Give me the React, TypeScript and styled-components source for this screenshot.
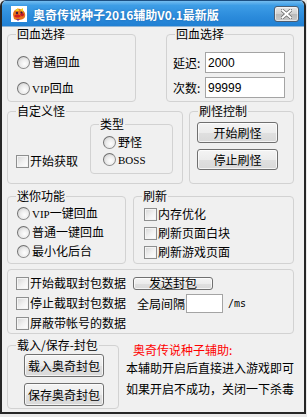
import React from 'react';
import styled, { createGlobalStyle } from 'styled-components';

const GlobalStyle = createGlobalStyle`
    html, body {
        margin: 0;
        padding: 0;
        background: #e9e9e9;
    }
    body {
        font-family: "SimSun", "Noto Sans CJK SC", sans-serif;
        font-size: 12px;
        color: #000;
    }
`;

const Window = styled.div`
    width: 306px;
    height: 414px;
    box-sizing: border-box;
    border: 2px solid #262626;
    border-top: 1px solid #1c4f82;
    border-radius: 6px 6px 0 0;
    overflow: hidden;
    background: #f0f0f0;
    display: flex;
    flex-direction: column;
`;

const TitleBar = styled.div`
    height: 25px;
    flex-shrink: 0;
    display: flex;
    align-items: center;
    padding: 0 5px 0 9px;
    background: linear-gradient(to bottom, #74bdf0 0%, #3d9de6 18%, #2c8cdc 60%, #2180d3 100%);
    border-bottom: 1px solid #8fb6d8;
`;

const Title = styled.div`
    flex: 1;
    margin-left: 6px;
    padding-top: 2px;
    color: #fff;
    font-weight: bold;
    font-size: 12px;
    line-height: 14px;
    font-family: "Noto Sans CJK SC", sans-serif;
    text-shadow: 0 0 2px rgba(0, 40, 90, 0.35);
`;

const CloseButton = styled.div`
    width: 25px;
    height: 16px;
    box-sizing: border-box;
    border: 1px solid #4d5d70;
    border-radius: 3px;
    background: linear-gradient(to bottom, #e6e6e6 0%, #d0d0d0 50%, #b9b9b9 51%, #c9c9c9 100%);
    box-shadow: inset 0 0 0 1px rgba(255, 255, 255, 0.55);
    display: flex;
    align-items: center;
    justify-content: center;
`;

const Body = styled.div`
    flex: 1;
    display: flex;
    flex-direction: column;
    padding-left: 5px;
`;

const Row = styled.div<{ $mt: number; $gap: number }>`
    display: flex;
    align-items: flex-start;
    margin-top: ${({ $mt }) => $mt}px;
    gap: ${({ $gap }) => $gap}px;
`;

const Group = styled.div<{ $w: number; $h: number }>`
    position: relative;
    box-sizing: border-box;
    width: ${({ $w }) => $w}px;
    height: ${({ $h }) => $h}px;
    border: 1px solid #d2d2d2;
    border-radius: 4px;
    flex-shrink: 0;
`;

const Legend = styled.span`
    position: absolute;
    top: -8px;
    left: 8px;
    padding: 0 1px;
    background: #f0f0f0;
    line-height: 14px;
    white-space: nowrap;
`;

const Stack = styled.div<{ $pt: number; $pl: number; $gap: number }>`
    display: flex;
    flex-direction: column;
    align-items: flex-start;
    padding-top: ${({ $pt }) => $pt}px;
    padding-left: ${({ $pl }) => $pl}px;
    gap: ${({ $gap }) => $gap}px;
`;

const Split = styled.div`
    display: flex;
    justify-content: space-between;
    align-items: flex-start;
    padding: 12px 9px 0 8px;
`;

const Shift = styled.div<{ $mt: number }>`
    margin-top: ${({ $mt }) => $mt}px;
`;

const Item = styled.label<{ $w?: number }>`
    display: flex;
    align-items: center;
    height: 14px;
    line-height: 14px;
    gap: 2px;
    white-space: nowrap;
    ${({ $w }) => ($w ? `width: ${$w}px; flex-shrink: 0;` : '')}
`;

const RadioDot = styled.span`
    width: 13px;
    height: 13px;
    box-sizing: border-box;
    border-radius: 50%;
    border: 1px solid #8b8b8b;
    border-top-color: #6f6f6f;
    border-left-color: #6f6f6f;
    background: radial-gradient(circle at 60% 62%, #fefefe 0%, #ececec 45%, #c4c4c4 100%);
    flex-shrink: 0;
`;

const CheckBox = styled.span`
    width: 13px;
    height: 13px;
    box-sizing: border-box;
    border: 1px solid #8e8f8f;
    background: linear-gradient(135deg, #d6d6d6 0%, #f2f2f2 55%, #ffffff 100%);
    box-shadow: inset 0 0 0 1px #f4f4f4;
    flex-shrink: 0;
    margin-right: -1px;
`;

const Latin = styled.span`
    font-family: "Liberation Serif", serif;
    font-size: 11px;
`;

const Field = styled.div`
    display: flex;
    align-items: center;
`;

const FieldLabel = styled.span`
    width: 32px;
    line-height: 14px;
    white-space: nowrap;
`;

const Input = styled.div<{ $w: number; $h: number }>`
    width: ${({ $w }) => $w}px;
    height: ${({ $h }) => $h}px;
    box-sizing: border-box;
    border: 1px solid #a4a4a4;
    background: #fff;
    padding-left: 2px;
    display: flex;
    align-items: center;
    font-family: "Liberation Sans", sans-serif;
    font-size: 12px;
    flex-shrink: 0;
`;

const Button = styled.div<{ $w: number; $h: number }>`
    width: ${({ $w }) => $w}px;
    height: ${({ $h }) => $h}px;
    box-sizing: border-box;
    border: 1px solid #707070;
    border-radius: 3px;
    background: linear-gradient(to bottom, #f4f4f4 0%, #ececec 50%, #e0e0e0 51%, #d9d9d9 100%);
    box-shadow: inset 0 0 0 1px rgba(255, 255, 255, 0.7);
    display: flex;
    align-items: center;
    justify-content: center;
    line-height: 12px;
    white-space: nowrap;
    flex-shrink: 0;
`;

const PacketRow = styled.div`
    display: flex;
    align-items: center;
    height: 20px;
`;

const PacketLabel = styled.span`
    margin-left: 4px;
    margin-right: 1px;
    white-space: nowrap;
`;

const Unit = styled.span`
    margin-left: 5px;
    font-family: "DejaVu Sans Mono", monospace;
    font-size: 10px;
`;

const Notes = styled.div`
    margin-left: 7px;
    margin-top: -2px;
    display: flex;
    flex-direction: column;
`;

const NoteLine = styled.div<{ $mt: number; $red?: boolean; $indent?: number }>`
    margin-top: ${({ $mt }) => $mt}px;
    margin-left: ${({ $indent }) => $indent || 0}px;
    line-height: 14px;
    white-space: nowrap;
    color: ${({ $red }) => ($red ? '#ff0000' : '#000')};
`;

const AppIcon = () => (
    <svg width="16" height="16" viewBox="0 0 16 16">
        <rect width="16" height="16" fill="#fff" />
        <path d="M2 9 C2 4 6 2 9 3 C13 4 15 7 14 11 C13 14 6 15 3 13 Z" fill="#e8731c" />
        <path d="M4 5 L7 2 L8 5 Z" fill="#f4d21f" />
        <path d="M9 4 L12 2 L12 6 Z" fill="#f4d21f" />
        <path d="M3 10 C5 8 8 8 10 10 C8 12 5 12 3 10 Z" fill="#d3201c" />
        <path d="M9 8 C11 6 13 7 13 9 C12 11 10 11 9 8 Z" fill="#c0182a" />
        <circle cx="6" cy="7" r="1.2" fill="#3a1a40" />
        <circle cx="10.5" cy="6.5" r="1.1" fill="#3a1a40" />
        <path d="M5 13 L7 15 L9 13 Z" fill="#7a2f8f" />
    </svg>
);

const CloseIcon = () => (
    <svg width="11" height="10" viewBox="0 0 11 10">
        <path d="M1.5 1.5 L9.5 8.5 M9.5 1.5 L1.5 8.5" stroke="#6c6c6c" strokeWidth="3.6" strokeLinecap="square" />
        <path d="M1.5 1.5 L9.5 8.5 M9.5 1.5 L1.5 8.5" stroke="#ffffff" strokeWidth="2" strokeLinecap="square" />
    </svg>
);

const Radio: React.FC<{ children: React.ReactNode }> = ({ children }) => (
    <Item>
        <RadioDot />
        <span>{children}</span>
    </Item>
);

const Check: React.FC<{ children: React.ReactNode; width?: number }> = ({ children, width }) => (
    <Item $w={width}>
        <CheckBox />
        <span>{children}</span>
    </Item>
);

export default function App() {
    return (
        <>
            <GlobalStyle />
            <Window>
                <TitleBar>
                    <AppIcon />
                    <Title>奥奇传说种子2016辅助V0.1最新版</Title>
                    <CloseButton>
                        <CloseIcon />
                    </CloseButton>
                </TitleBar>
                <Body>
                    <Row $mt={7} $gap={30}>
                        <Group $w={129} $h={68}>
                            <Legend>回血选择</Legend>
                            <Stack $pt={20} $pl={9} $gap={12}>
                                <Radio>普通回血</Radio>
                                <Radio><Latin>VIP</Latin>回血</Radio>
                            </Stack>
                        </Group>
                        <Group $w={128} $h={68}>
                            <Legend>回血选择</Legend>
                            <Stack $pt={17} $pl={6} $gap={4}>
                                <Field>
                                    <FieldLabel>延迟:</FieldLabel>
                                    <Input $w={80} $h={21}>2000</Input>
                                </Field>
                                <Field>
                                    <FieldLabel>次数:</FieldLabel>
                                    <Input $w={80} $h={21}>99999</Input>
                                </Field>
                            </Stack>
                        </Group>
                    </Row>

                    <Row $mt={9} $gap={6}>
                        <Group $w={176} $h={73}>
                            <Legend>自定义怪</Legend>
                            <Split>
                                <Shift $mt={30}>
                                    <Check>开始获取</Check>
                                </Shift>
                                <Group $w={83} $h={50}>
                                    <Legend>类型</Legend>
                                    <Stack $pt={10} $pl={12} $gap={3}>
                                        <Radio>野怪</Radio>
                                        <Radio><Latin>BOSS</Latin></Radio>
                                    </Stack>
                                </Group>
                            </Split>
                        </Group>
                        <Group $w={105} $h={73}>
                            <Legend>刷怪控制</Legend>
                            <Stack $pt={10} $pl={7} $gap={6}>
                                <Button $w={81} $h={21}>开始刷怪</Button>
                                <Button $w={81} $h={21}>停止刷怪</Button>
                            </Stack>
                        </Group>
                    </Row>

                    <Row $mt={12} $gap={7}>
                        <Group $w={119} $h={68}>
                            <Legend>迷你功能</Legend>
                            <Stack $pt={9} $pl={9} $gap={5}>
                                <Radio><Latin>VIP</Latin>一键回血</Radio>
                                <Radio>普通一键回血</Radio>
                                <Radio>最小化后台</Radio>
                            </Stack>
                        </Group>
                        <Group $w={161} $h={68}>
                            <Legend>刷新</Legend>
                            <Stack $pt={10} $pl={10} $gap={5}>
                                <Check>内存优化</Check>
                                <Check>刷新页面白块</Check>
                                <Check>刷新游戏页面</Check>
                            </Stack>
                        </Group>
                    </Row>

                    <Row $mt={5} $gap={0}>
                        <Group $w={287} $h={65}>
                            <Stack $pt={3} $pl={8} $gap={0}>
                                <PacketRow>
                                    <Check width={117}>开始截取封包数据</Check>
                                    <Button $w={80} $h={13}>发送封包</Button>
                                </PacketRow>
                                <PacketRow>
                                    <Check width={117}>停止截取封包数据</Check>
                                    <PacketLabel>全局间隔</PacketLabel>
                                    <Input $w={37} $h={19} />
                                    <Unit>/ms</Unit>
                                </PacketRow>
                                <PacketRow>
                                    <Check width={117}>屏蔽带帐号的数据</Check>
                                </PacketRow>
                            </Stack>
                        </Group>
                    </Row>

                    <Row $mt={11} $gap={0}>
                        <Group $w={112} $h={64}>
                            <Legend>载入/保存-封包</Legend>
                            <Stack $pt={8} $pl={16} $gap={6}>
                                <Button $w={80} $h={23}>载入奥奇封包</Button>
                                <Button $w={80} $h={23}>保存奥奇封包</Button>
                            </Stack>
                        </Group>
                        <Notes>
                            <NoteLine $mt={0} $red $indent={7}>奥奇传说种子辅助:</NoteLine>
                            <NoteLine $mt={4}>本辅助开启后直接进入游戏即可</NoteLine>
                            <NoteLine $mt={7}>如果开启不成功，关闭一下杀毒</NoteLine>
                        </Notes>
                    </Row>
                </Body>
            </Window>
        </>
    );
}
